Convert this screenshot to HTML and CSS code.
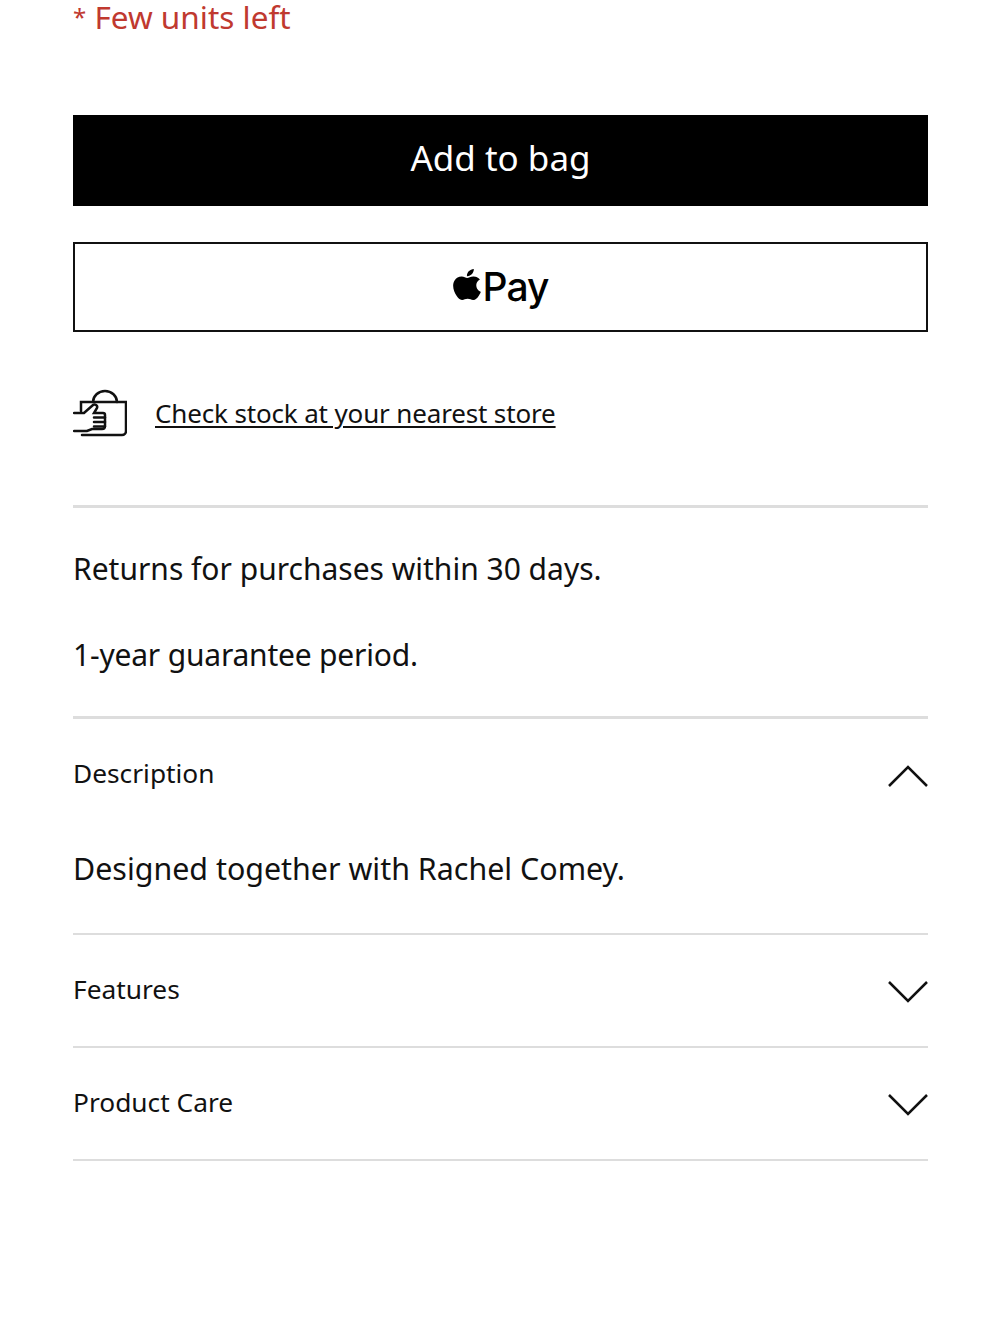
FILE: index.html
```html
<!doctype html>
<html lang="en">

<head>
    <meta charset="utf-8">
    <meta name="viewport" content="width=device-width, initial-scale=1">
    <title>Product</title>
    <link rel="stylesheet" href="styles.css">
</head>

<body>

    <main class="product">
        <p class="stock-note"><span class="star">*</span> Few units left</p>

        <button class="btn btn-bag" type="button">Add to bag</button>

        <button class="btn btn-pay" type="button">
            <svg class="apple-logo" viewBox="0 0 24 24" preserveAspectRatio="none" aria-hidden="true">
                <path d="M12.152 6.896c-.948 0-2.415-1.078-3.96-1.04-2.04.027-3.91 1.183-4.961 3.014-2.117 3.675-.546 9.103 1.519 12.09 1.013 1.454 2.208 3.09 3.792 3.039 1.52-.065 2.09-.987 3.935-.987 1.831 0 2.35.987 3.96.948 1.637-.026 2.676-1.48 3.676-2.948 1.156-1.688 1.636-3.325 1.662-3.415-.039-.013-3.182-1.221-3.22-4.857-.026-3.04 2.48-4.494 2.597-4.559-1.429-2.09-3.623-2.324-4.39-2.376-2-.156-3.675 1.09-4.61 1.09zM15.53 3.83c.843-1.012 1.4-2.427 1.245-3.83-1.207.052-2.662.805-3.532 1.818-.78.896-1.454 2.338-1.273 3.714 1.338.104 2.715-.688 3.559-1.701" />
            </svg>
            <span>Pay</span>
        </button>

        <div class="store-row">
            <svg class="store-icon" viewBox="0 0 54 48" aria-hidden="true">
                <path d="M20 13A12 11 0 0 1 44 13" />
                <path d="M8 22V13H53V42a4 4 0 0 1-4 4H9" />
                <path d="M1 24H11L20 16c2-1.500 5 .5 4 3L21 24H30c1.500 0 2 1 2 2V37c0 2-1 3-3 3H19L14 42H1" />
                <path d="M21 28.500H32M21 33H32M21 37.500H32" />
            </svg>
            <a class="store-link" href="javascript:void(0)">Check stock at your nearest store</a>
        </div>

        <section class="policies">
            <p>Returns for purchases within 30 days.</p>
            <p class="policy-short">1-year guarantee period.</p>
        </section>

        <section class="fold fold-open">
            <div class="fold-head">
                <span>Description</span>
                <svg class="chevron" viewBox="0 0 40 22" aria-hidden="true"><path d="M1 21L20 2l19 19" /></svg>
            </div>
            <p class="fold-body">Designed together with Rachel Comey.</p>
        </section>

        <section class="fold">
            <div class="fold-head">
                <span>Features</span>
                <svg class="chevron" viewBox="0 0 40 22" aria-hidden="true"><path d="M1 1l19 19L39 1" /></svg>
            </div>
        </section>

        <section class="fold">
            <div class="fold-head">
                <span>Product Care</span>
                <svg class="chevron" viewBox="0 0 40 22" aria-hidden="true"><path d="M1 1l19 19L39 1" /></svg>
            </div>
        </section>
    </main>

</body>

</html>
```

FILE: styles.css
```css
body {
    font-family: "Noto Sans", Arial, sans-serif;
    margin: 0;
    padding: 0;
    background-color: #fff;
    color: #111;
}

.product {
    display: flex;
    flex-direction: column;
    padding: 0 72px 0 73px;
}

p {
    margin: 0;
}

.stock-note {
    height: 34px;
    font-size: 31.5px;
    line-height: 34px;
    color: #c0392f;
}

.star {
    font-size: 24px;
    line-height: 1;
    vertical-align: 3px;
}

.btn {
    display: flex;
    align-items: center;
    justify-content: center;
    width: 100%;
    height: 91px;
    padding: 0;
    border-radius: 0;
    font-family: inherit;
}

.btn-bag {
    margin-top: 81px;
    padding-bottom: 6px;
    border: 0;
    background: #000;
    color: #fff;
    font-size: 35px;
}

.btn-pay {
    height: 90px;
    margin-top: 36px;
    padding-bottom: 2px;
    border: 2px solid #111;
    background: #fff;
    color: #000;
    font-family: "Inter", sans-serif;
    font-size: 39px;
    font-weight: 500;
    letter-spacing: -1px;
}

.apple-logo {
    width: 34px;
    height: 31px;
    margin: -3px -1px 0 -3px;
}

.store-row {
    display: flex;
    align-items: center;
    gap: 28px;
    margin-top: 57px;
    padding-bottom: 68px;
    border-bottom: 3px solid #ddd;
}

.store-icon {
    width: 54px;
    height: 48px;
    fill: none;
    stroke: #111;
    stroke-width: 2.5;
    stroke-linecap: round;
}

.store-link {
    font-size: 26px;
    letter-spacing: -0.15px;
    color: #111;
    text-decoration: underline;
    text-decoration-thickness: 2px;
    text-underline-offset: 3px;
}

.policies {
    display: flex;
    flex-direction: column;
    gap: 42px;
    padding: 39px 0;
    border-bottom: 3px solid #ddd;
    font-size: 30px;
    line-height: 44px;
}

.policy-short {
    letter-spacing: -0.2px;
}

.fold {
    border-bottom: 2px solid #ddd;
}

.fold-head {
    display: flex;
    align-items: center;
    justify-content: space-between;
    box-sizing: border-box;
    height: 111px;
    padding-bottom: 4px;
    font-size: 26.3px;
}

.fold-open .fold-head {
    height: 109px;
    padding-bottom: 2px;
}

.fold-body {
    padding: 19px 0 42px;
    font-size: 30.4px;
    line-height: 44px;
}

.chevron {
    width: 40px;
    height: 22px;
    margin-top: 6px;
    fill: none;
    stroke: #111;
    stroke-width: 2.5;
}
```
